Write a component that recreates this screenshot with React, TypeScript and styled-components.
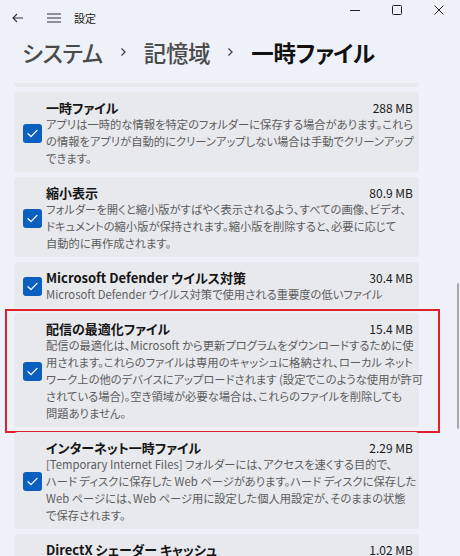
import React from "react";
import styled, { createGlobalStyle } from "styled-components";

const GlobalStyle = createGlobalStyle`
  html, body {
    margin: 0;
    padding: 0;
    background: #eef1f7;
  }
  body {
    font-family: "Noto Sans CJK JP", "Noto Sans", sans-serif;
    font-feature-settings: "palt";
  }
`;

const Window = styled.div`
  position: relative;
  width: 460px;
  height: 556px;
  overflow: hidden;
  background: #eef1f7;
`;

const TitleBar = styled.div`
  display: flex;
  align-items: flex-start;
  height: 36px;
`;

const NavButton = styled.div`
  display: flex;
  align-items: center;
  justify-content: center;
  width: 36px;
  height: 36px;
  color: #303030;
`;

const AppName = styled.div`
  margin-left: 2px;
  line-height: 36px;
  font-size: 11px;
  color: #222;
`;

const WindowControls = styled.div`
  display: flex;
  margin-left: auto;
`;

const ControlButton = styled.div`
  display: flex;
  align-items: center;
  justify-content: center;
  width: 42px;
  height: 20px;
  color: #222;
`;

const Breadcrumb = styled.div`
  display: flex;
  align-items: center;
  gap: 17px;
  height: 32px;
  padding-left: 22px;
`;

const Crumb = styled.span<{ $current?: boolean }>`
  font-size: 22.5px;
  font-weight: ${(p) => (p.$current ? 700 : 500)};
  color: ${(p) => (p.$current ? "#111" : "#4a4a4a")};
  letter-spacing: -0.3px;
`;

const List = styled.div`
  display: flex;
  flex-direction: column;
  gap: 5px;
  width: 405px;
  margin: 15px 0 0 14px;
`;

const Card = styled.div<{ $stub?: boolean }>`
  display: flex;
  align-items: center;
  gap: 4px;
  padding: ${(p) => (p.$stub ? "0" : "7px 6px 5px 9px")};
  height: ${(p) => (p.$stub ? "4px" : "auto")};
  background: #e8e9ed;
  border-radius: ${(p) => (p.$stub ? "0 0 4px 4px" : "4px")};
`;

const Highlight = styled.div`
  margin: -4px -21px -6px -9px;
  padding: 2px 19px 4px 7px;
  border: 2px solid #e2202c;
`;

const Check = styled.div`
  flex: none;
  display: flex;
  align-items: center;
  justify-content: center;
  width: 19px;
  height: 19px;
  border-radius: 3px;
  background: #0a5fbf;
  color: #fff;
`;

const Body = styled.div`
  flex: 1;
  min-width: 0;
`;

const Head = styled.div`
  display: flex;
  justify-content: space-between;
  align-items: baseline;
  line-height: 17px;
`;

const Title = styled.span`
  font-size: 13px;
  font-weight: 700;
  color: #151515;
`;

const Size = styled.span`
  font-size: 12px;
  color: #1a1a1a;
`;

const Desc = styled.div`
  font-size: 11.3px;
  line-height: 17px;
  color: #5c5c5c;
  white-space: nowrap;
`;

const ScrollThumb = styled.div`
  position: absolute;
  right: 1px;
  top: 283px;
  width: 2px;
  height: 146px;
  border-radius: 1px;
  background: #a8a8a8;
`;

const Chevron = () => (
  <svg width="7" height="10" viewBox="0 0 7 10" fill="none" stroke="#444" strokeWidth="1.3">
    <path d="M1.5 1.5 L5 5 L1.5 8.5" />
  </svg>
);

const CheckMark = () => (
  <svg width="11" height="9" viewBox="0 0 11 9" fill="none" stroke="#fff" strokeWidth="1.3" strokeLinecap="round" strokeLinejoin="round">
    <path d="M1 4.8 L4 7.6 L10 1.4" />
  </svg>
);

type Item = { title: string; size: string; lines: string[]; marked?: boolean };

const items: Item[] = [
  {
    title: "一時ファイル",
    size: "288 MB",
    lines: [
      "アプリは一時的な情報を特定のフォルダーに保存する場合があります。これら",
      "の情報をアプリが自動的にクリーンアップしない場合は手動でクリーンアップ",
      "できます。",
    ],
  },
  {
    title: "縮小表示",
    size: "80.9 MB",
    lines: [
      "フォルダーを開くと縮小版がすばやく表示されるよう、すべての画像、ビデオ、",
      "ドキュメントの縮小版が保持されます。縮小版を削除すると、必要に応じて",
      "自動的に再作成されます。",
    ],
  },
  {
    title: "Microsoft Defender ウイルス対策",
    size: "30.4 MB",
    lines: ["Microsoft Defender ウイルス対策で使用される重要度の低いファイル"],
  },
  {
    title: "配信の最適化ファイル",
    size: "15.4 MB",
    marked: true,
    lines: [
      "配信の最適化は、Microsoft から更新プログラムをダウンロードするために使",
      "用されます。これらのファイルは専用のキャッシュに格納され、ローカル ネット",
      "ワーク上の他のデバイスにアップロードされます (設定でこのような使用が許可",
      "されている場合)。空き領域が必要な場合は、これらのファイルを削除しても",
      "問題ありません。",
    ],
  },
  {
    title: "インターネット一時ファイル",
    size: "2.29 MB",
    lines: [
      "[Temporary Internet Files] フォルダーには、アクセスを速くする目的で、",
      "ハード ディスクに保存した Web ページがあります。ハード ディスクに保存した",
      "Web ページには、Web ページ用に設定した個人用設定が、そのままの状態",
      "で保存されます。",
    ],
  },
  {
    title: "DirectX シェーダー キャッシュ",
    size: "1.02 MB",
    lines: [
      "グラフィックス システムによって作成されたファイルをクリーンアップします。",
      "これらのファイルは、必要に応じて再作成されます。",
    ],
  },
];

const FileCard: React.FC<{ item: Item }> = ({ item }) => (
  <Card>
    <Check>
      <CheckMark />
    </Check>
    <Body>
      <Head>
        <Title>{item.title}</Title>
        <Size>{item.size}</Size>
      </Head>
      <Desc>
        {item.lines.map((l, i) => (
          <React.Fragment key={i}>
            {i > 0 && <br />}
            {l}
          </React.Fragment>
        ))}
      </Desc>
    </Body>
  </Card>
);

const App: React.FC = () => {
  return (
    <Window>
      <GlobalStyle />
      <TitleBar>
        <NavButton>
          <svg width="12" height="10" viewBox="0 0 12 10" fill="none" stroke="#333" strokeWidth="1.1">
            <path d="M11 5 H1.2 M5 1 L1 5 L5 9" />
          </svg>
        </NavButton>
        <NavButton>
          <svg width="14" height="10" viewBox="0 0 14 10" fill="none" stroke="#333" strokeWidth="1.1">
            <path d="M0 1 H14 M0 5 H14 M0 9 H14" />
          </svg>
        </NavButton>
        <AppName>設定</AppName>
        <WindowControls>
          <ControlButton>
            <svg width="10" height="10" viewBox="0 0 10 10" stroke="#222" strokeWidth="1">
              <path d="M0 5.5 H10" />
            </svg>
          </ControlButton>
          <ControlButton>
            <svg width="10" height="10" viewBox="0 0 10 10" fill="none" stroke="#222" strokeWidth="1">
              <rect x="0.5" y="0.5" width="9" height="9" rx="1" />
            </svg>
          </ControlButton>
          <ControlButton>
            <svg width="10" height="10" viewBox="0 0 10 10" stroke="#222" strokeWidth="1">
              <path d="M0.5 0.5 L9.5 9.5 M9.5 0.5 L0.5 9.5" />
            </svg>
          </ControlButton>
        </WindowControls>
      </TitleBar>
      <Breadcrumb>
        <Crumb>システム</Crumb>
        <Chevron />
        <Crumb>記憶域</Crumb>
        <Chevron />
        <Crumb $current>一時ファイル</Crumb>
      </Breadcrumb>
      <List>
        <Card $stub />
        {items.map((it) =>
          it.marked ? (
            <Highlight key={it.title}>
              <FileCard item={it} />
            </Highlight>
          ) : (
            <FileCard key={it.title} item={it} />
          )
        )}
      </List>
      <ScrollThumb />
    </Window>
  );
};

export default App;
